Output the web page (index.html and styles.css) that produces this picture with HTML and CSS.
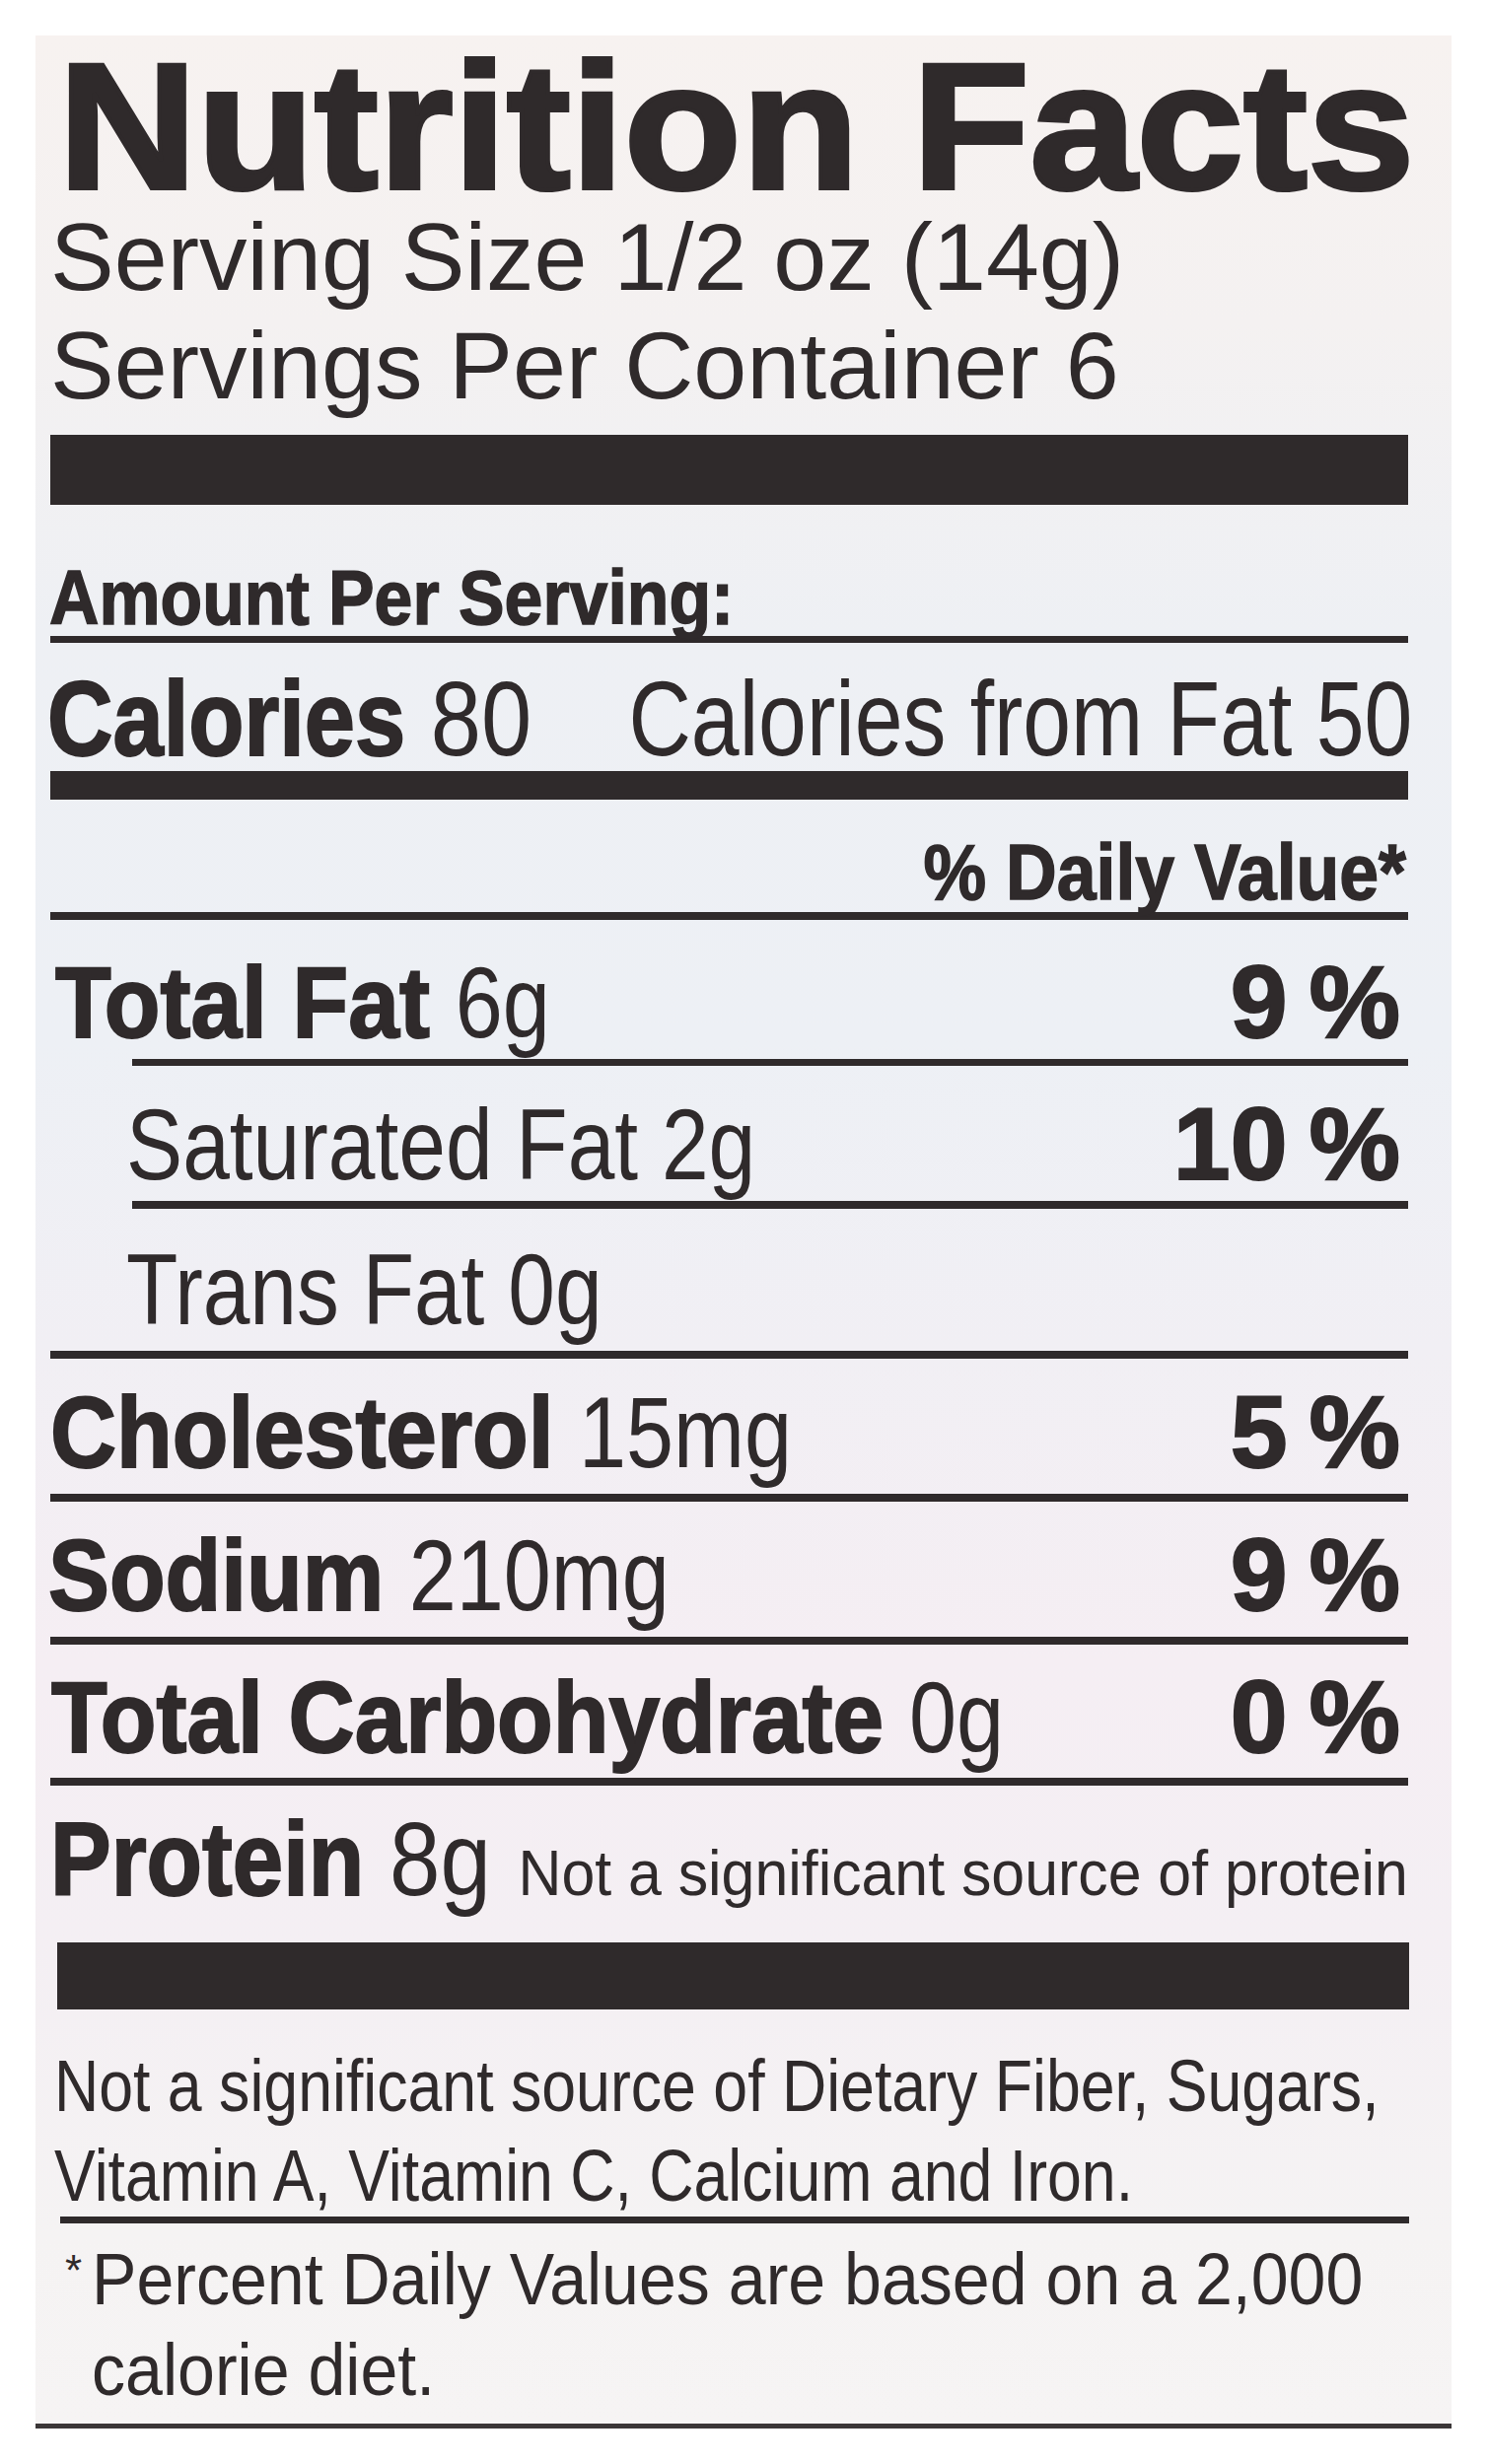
FILE: index.html
```html
<!DOCTYPE html>
<html lang="en">
<head>
<meta charset="utf-8">
<title>Nutrition Facts</title>
<link rel="stylesheet" href="styles.css">
</head>
<body>
<div class="panel">
  <h1 class="title">Nutrition Facts</h1>
  <div class="serving">Serving Size 1/2 oz (14g)</div>
  <div class="serving">Servings Per Container 6</div>
  <div class="bar bar-thick"></div>
  <div class="amount"><span class="amount-text">Amount Per Serving:</span></div>
  <div class="rule"></div>
  <div class="cal-row">
    <span class="cal-left"><b>Calories</b> 80</span>
    <span class="cal-right"><span class="cal-right-text">Calories from Fat 50</span></span>
  </div>
  <div class="bar bar-mid"></div>
  <div class="dv-row"><span class="dv">% Daily Value*</span></div>
  <div class="rule rule-8"></div>

  <div class="row r-fat">
    <span class="lbl lbl-fat"><b>Total Fat</b> <span class="amt">6g</span></span>
    <span class="pct">9<span class="pc">%</span></span>
  </div>
  <div class="rule rule-indent"></div>
  <div class="row r-sat">
    <span class="lbl sub">Saturated Fat 2g</span>
    <span class="pct">10<span class="pc">%</span></span>
  </div>
  <div class="rule rule-indent rule-8"></div>
  <div class="row r-trans">
    <span class="lbl sub">Trans Fat 0g</span>
  </div>
  <div class="rule rule-8"></div>
  <div class="row r-chol">
    <span class="lbl"><b>Cholesterol</b> <span class="amt">15mg</span></span>
    <span class="pct">5<span class="pc">%</span></span>
  </div>
  <div class="rule rule-8"></div>
  <div class="row r-sod">
    <span class="lbl lbl-sod"><b>Sodium</b> <span class="amt">210mg</span></span>
    <span class="pct">9<span class="pc">%</span></span>
  </div>
  <div class="rule rule-8"></div>
  <div class="row r-carb">
    <span class="lbl lbl-carb"><b>Total Carbohydrate</b> <span class="amt">0g</span></span>
    <span class="pct">0<span class="pc">%</span></span>
  </div>
  <div class="rule rule-8"></div>
  <div class="row r-prot">
    <span class="lbl lbl-prot"><b>Protein</b> <span class="amt amt-prot">8g</span></span>
    <span class="prot-note"><span class="prot-note-text">Not a significant source of protein</span></span>
  </div>
  <div class="bar bar-bottom"></div>

  <div class="note1">Not a significant source of Dietary Fiber, Sugars,<br>Vitamin A, Vitamin C, Calcium and Iron.</div>
  <div class="rule rule-note"></div>
  <div class="note2">
    <span class="ast">*</span>
    <span class="note2-text">Percent Daily Values are based on a 2,000<br>calorie diet.</span>
  </div>
</div>
</body>
</html>
```

FILE: styles.css
```css
html, body {
  margin: 0;
  padding: 0;
  background: #ffffff;
}

body {
  font-family: "Liberation Sans", Arial, Helvetica, sans-serif;
  color: #2f2a2b;
}

.panel {
  margin: 36px 0 0 36px;
  width: 1436px;
  height: 2427px;
  box-sizing: border-box;
  padding: 14px 44px 0 15px;
  border-bottom: 5px solid #3b3637;
  background: linear-gradient(180deg,
    #f7f2f0 0%,
    #f4f1f1 12%,
    #eef0f4 25%,
    #edf0f5 42%,
    #f1eff4 55%,
    #f5eef3 68%,
    #f4eff3 80%,
    #f5f3f3 92%,
    #f6f4f4 100%);
}

/* Title */
.title {
  margin: 0 0 0 8px;
  height: 156px;
  font-size: 182px;
  line-height: 156px;
  font-weight: 700;
  white-space: nowrap;
  transform: scaleX(1.071);
  transform-origin: left center;
  -webkit-text-stroke: 4px #2f2a2b;
}

.serving {
  height: 110px;
  font-size: 97px;
  line-height: 110px;
  white-space: nowrap;
}

/* Bars and rules */
.bar,
.rule {
  background: #2f2a2b;
}

.bar-thick {
  height: 71px;
  margin-top: 15px;
}

.bar-mid {
  height: 29px;
}

.bar-bottom {
  height: 68px;
  margin-left: 7px;
  margin-right: -1px;
}

.rule {
  height: 7px;
}

.rule-8 {
  height: 8px;
}

.rule-indent {
  margin-left: 83px;
}

.rule-note {
  height: 7px;
  margin-top: -4px;
  margin-left: 10px;
  margin-right: -1px;
}

/* Amount per serving */
.amount {
  margin-top: 55px;
  height: 78px;
  font-size: 78px;
  line-height: 78px;
  font-weight: 700;
  white-space: nowrap;
}

.amount-text {
  display: inline-block;
  margin-left: -1px;
  transform: scaleX(0.895);
  transform-origin: left center;
  -webkit-text-stroke: 1.5px #2f2a2b;
}

/* Calories */
.cal-row {
  display: flex;
  align-items: baseline;
  margin-top: 24px;
  height: 106px;
  font-size: 107px;
  line-height: 107px;
  white-space: nowrap;
}

.cal-left {
  flex: none;
  margin-left: -3px;
  transform: scaleX(0.86);
  transform-origin: left center;
}

.cal-left b {
  font-weight: 700;
  -webkit-text-stroke: 2px #2f2a2b;
}

.cal-right {
  flex: 1 1 0;
  min-width: 0;
  display: flex;
  justify-content: flex-end;
}

.cal-right-text {
  flex: none;
  margin-right: -4px;
  transform: scaleX(0.82);
  transform-origin: right center;
}

/* Daily value header */
.dv-row {
  margin-top: 33px;
  height: 81px;
  font-size: 80px;
  line-height: 81px;
  font-weight: 700;
  text-align: right;
  white-space: nowrap;
}

.dv {
  display: inline-block;
  margin-right: 2px;
  transform: scaleX(0.895);
  transform-origin: right center;
  -webkit-text-stroke: 1.5px #2f2a2b;
}

/* Nutrient rows */
.row {
  display: flex;
  justify-content: space-between;
  align-items: baseline;
  box-sizing: border-box;
  font-size: 102px;
  line-height: 102px;
  white-space: nowrap;
}

.r-fat   { height: 141px; padding-top: 33px; }
.r-sat   { height: 137px; padding-top: 29px; }
.r-trans { height: 144px; padding-top: 31px; }
.r-chol  { height: 137px; padding-top: 24px; }
.r-sod   { height: 137px; padding-top: 24px; }
.r-carb  { height: 135px; padding-top: 23px; }
.r-prot  { height: 159px; padding-top: 22px; }

.lbl {
  flex: none;
  transform: scaleX(0.91);
  transform-origin: left center;
}

.lbl b {
  font-weight: 700;
  -webkit-text-stroke: 2px #2f2a2b;
}

.lbl-fat  { margin-left: 5px; }
.lbl-sod  { margin-left: -2px; }
.lbl-carb { margin-left: 1px; }

.amt {
  display: inline-block;
  transform: scaleX(0.93);
  transform-origin: left center;
}

.sub {
  margin-left: 77px;
  font-weight: 400;
  transform: scaleX(0.84);
}

.pct {
  flex: none;
  margin-right: 8px;
  font-size: 104px;
  line-height: 100px;
  font-weight: 700;
  -webkit-text-stroke: 2px #2f2a2b;
}

.pc {
  margin-left: 22px;
}

.lbl-prot {
  font-size: 105px;
  line-height: 105px;
  transform: scaleX(0.88);
}

.amt-prot {
  transform: none;
}

.prot-note {
  flex: 1 1 0;
  min-width: 0;
  display: flex;
  justify-content: flex-end;
}

.prot-note-text {
  flex: none;
  font-size: 64px;
  line-height: 64px;
  transform: scaleX(0.95);
  transform-origin: right center;
}

/* Footnotes */
.note1 {
  margin-top: 32px;
  margin-left: 4px;
  font-size: 75px;
  line-height: 91px;
  white-space: nowrap;
  transform: scaleX(0.835);
  transform-origin: left center;
}

.note2 {
  display: flex;
  align-items: flex-start;
  margin-top: 11px;
  white-space: nowrap;
}

.ast {
  flex: none;
  width: 27px;
  margin-left: 15px;
  margin-top: 15px;
  font-size: 44px;
  line-height: 44px;
}

.note2-text {
  flex: none;
  font-size: 74px;
  line-height: 92px;
  transform: scaleX(0.92);
  transform-origin: left center;
}
```
